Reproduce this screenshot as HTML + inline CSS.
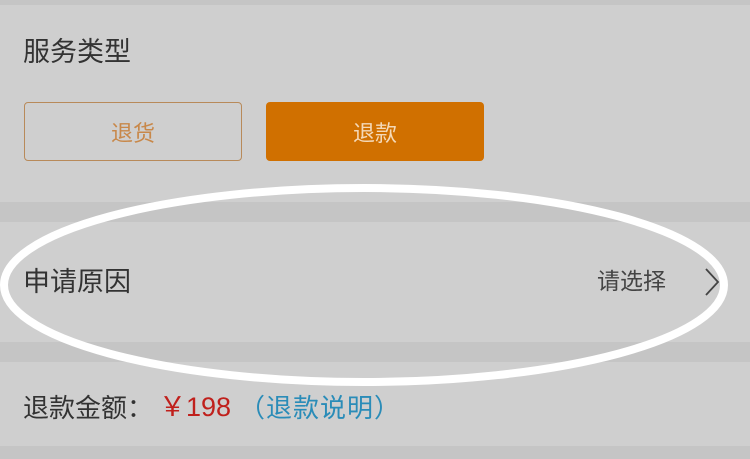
<!DOCTYPE html>
<html><head><meta charset="utf-8"><style>
body{margin:0;width:750px;height:459px;background:#cfcfcf;position:relative;overflow:hidden;font-family:"Liberation Sans","Noto Sans CJK SC",sans-serif;}
.band{position:absolute;left:0;width:750px;background:#c5c5c5}
.t{position:absolute;white-space:nowrap;line-height:1}
.btn{position:absolute;top:102px;height:59px;width:218px;box-sizing:border-box;border-radius:4px;display:flex;align-items:center;justify-content:center;font-size:22px}
</style></head><body>
<div class="band" style="top:0;height:5px"></div>
<div class="band" style="top:202px;height:20px"></div>
<div class="band" style="top:342px;height:20px"></div>
<div class="band" style="top:446px;height:13px"></div>
<div class="t" style="left:23px;top:39px;font-size:27px;color:#333">服务类型</div>
<div class="btn" style="left:24px;border:1px solid #b88a5a;color:#c8884a">退货</div>
<div class="btn" style="left:266px;background:#d07000;color:#f4d9b8">退款</div>
<div class="t" style="left:23px;top:269px;font-size:27px;color:#333">申请原因</div>
<div class="t" style="left:597px;top:270px;font-size:23px;color:#444">请选择</div>
<svg style="position:absolute;left:700px;top:266px" width="24" height="32"><path d="M6 3 L18 16 L6 29" fill="none" stroke="#444" stroke-width="1.8"/></svg>
<div class="t" style="left:23px;top:395px;font-size:26px;color:#333">退款金额：</div>
<div class="t" style="left:159px;top:394px;font-size:27px;color:#c0201c">￥198</div>
<div class="t" style="left:239px;top:395px;font-size:26px;color:#2a8cb8;letter-spacing:1px">（退款说明）</div>
<svg style="position:absolute;left:0;top:0" width="750" height="459"><ellipse cx="364" cy="285" rx="360" ry="97" fill="none" stroke="#fff" stroke-width="8"/></svg>
</body></html>
